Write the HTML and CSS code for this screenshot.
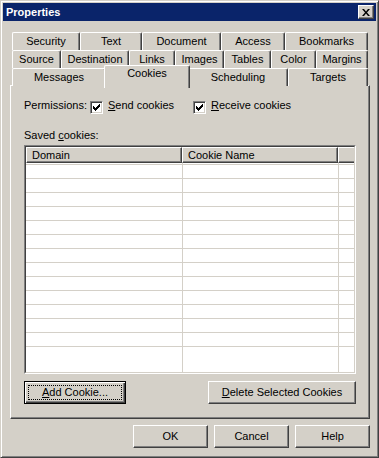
FILE: index.html
```html
<!DOCTYPE html>
<html>
<head>
  <title>Properties</title>
  <meta charset="UTF-8"/>
  <link rel="stylesheet" href="styles.css">
</head>

<body>
<div class="window">
  <header class="title-bar">
    <span class="title">Properties</span>
    <button class="close-btn" aria-label="Close">
      <svg width="8" height="7" viewBox="0 0 8 7">
        <path d="M0 0h2l2 2.4 2-2.4h2l-3 3.5 3 3.5h-2l-2-2.4-2 2.4h-2l3-3.5z" fill="#000"/>
      </svg>
    </button>
  </header>

  <div class="dialog-body">
    <!-- tab rows, back to front -->
    <div class="tabs">
      <div class="tab-row row-1">
        <div class="tab">Security</div>
        <div class="tab">Text</div>
        <div class="tab">Document</div>
        <div class="tab">Access</div>
        <div class="tab">Bookmarks</div>
      </div>
      <div class="tab-row row-2">
        <div class="tab">Source</div>
        <div class="tab">Destination</div>
        <div class="tab">Links</div>
        <div class="tab">Images</div>
        <div class="tab">Tables</div>
        <div class="tab">Color</div>
        <div class="tab">Margins</div>
      </div>
      <div class="tab-row row-3">
        <div class="tab">Messages</div>
        <div class="tab active">Cookies</div>
        <div class="tab">Scheduling</div>
        <div class="tab">Targets</div>
      </div>
    </div>

    <div class="panel">
      <div class="permissions">
        <span class="label">Permissions:</span>
        <label class="check">
          <span class="box"><svg width="7" height="7" viewBox="0 0 7 7"><path d="M6 0H7V3H6V4H5V5H4V6H3V7H2V6H1V5H0V2H1V3H2V4H3V3H4V2H5V1H6Z" fill="#000"/></svg></span>
          <span><u>S</u>end cookies</span>
        </label>
        <label class="check">
          <span class="box"><svg width="7" height="7" viewBox="0 0 7 7"><path d="M6 0H7V3H6V4H5V5H4V6H3V7H2V6H1V5H0V2H1V3H2V4H3V3H4V2H5V1H6Z" fill="#000"/></svg></span>
          <span><u>R</u>eceive cookies</span>
        </label>
      </div>

      <div class="saved-label">Saved <u>c</u>ookies:</div>

      <div class="list">
        <div class="list-inner">
          <div class="list-head">
            <div class="col-head">Domain</div>
            <div class="col-head">Cookie Name</div>
            <div class="col-head last"></div>
          </div>
          <div class="list-body">
            <div class="col"></div>
            <div class="col"></div>
            <div class="col"></div>
          </div>
        </div>
      </div>

      <div class="panel-buttons">
        <button class="btn default add-btn"><u>A</u>dd Cookie...</button>
        <button class="btn delete-btn"><u>D</u>elete Selected Cookies</button>
      </div>
    </div>

    <div class="dialog-buttons">
      <button class="btn">OK</button>
      <button class="btn">Cancel</button>
      <button class="btn">Help</button>
    </div>
  </div>
</div>
</body>
</html>
```

FILE: styles.css
```css
* {
  box-sizing: border-box;
}

body {
  margin: 0;
  padding: 0;
  background-color: #d4d0c8;
  color: #000;
  font-family: "Liberation Sans", Arial, sans-serif;
  font-size: 11px;
}

u {
  text-decoration: underline;
  text-underline-offset: 1px;
}

/* window frame */
.window {
  width: 379px;
  height: 458px;
  padding: 2px;
  background-color: #d4d0c8;
  border: 1px solid;
  border-color: #d4d0c8 #404040 #404040 #d4d0c8;
  box-shadow: inset 1px 1px #fff, inset -1px -1px #808080;
  display: flex;
  flex-direction: column;
}

.title-bar {
  height: 18px;
  background-color: #0a246a;
  display: flex;
  align-items: center;
  justify-content: space-between;
  padding-left: 3px;
  padding-right: 2px;
}

.title {
  color: #fff;
  font-weight: bold;
  line-height: 18px;
}

.close-btn {
  width: 16px;
  height: 14px;
  padding: 0;
  background-color: #d4d0c8;
  border: 1px solid;
  border-color: #fff #404040 #404040 #fff;
  box-shadow: inset -1px -1px #808080;
  display: flex;
  align-items: center;
  justify-content: center;
}

.close-btn svg {
  display: block;
  margin-left: -1px;
}

.dialog-body {
  padding: 11px 6px 7px 7px;
}

/* tabs */
.tabs {
  padding: 0 2px;
}

.tab-row {
  display: grid;
  height: 18px;
}

.row-1 {
  grid-template-columns: 68px 62px 79px 64px 83px;
}

.row-2 {
  grid-template-columns: 49px 68px 46px 49px 47px 45px 52px;
}

.row-3 {
  grid-template-columns: 94px 82px 100px 80px;
}

.tab {
  background-color: #d4d0c8;
  border-top: 1px solid #fff;
  border-left: 1px solid #fff;
  border-right: 1px solid #404040;
  border-radius: 2px 2px 0 0;
  box-shadow: inset -1px 0 #808080;
  padding-top: 2px;
  line-height: 13px;
  text-align: center;
  white-space: nowrap;
}

.tab.active {
  position: relative;
  z-index: 1;
  margin: -3px -2px -2px;
  padding-top: 1px;
}

/* page panel */
.panel {
  margin-top: -1px;
  border: 1px solid;
  border-color: #fff #404040 #404040 #fff;
  box-shadow: inset -1px -1px #808080;
  padding: 13px 13px 14px 13px;
}

.permissions {
  display: grid;
  grid-template-columns: 66px 103px auto;
  align-items: start;
  line-height: 13px;
}

.check {
  display: flex;
  align-items: flex-start;
  gap: 5px;
}

.box {
  width: 13px;
  height: 13px;
  margin-top: 2px;
  background-color: #fff;
  border: 1px solid;
  border-color: #808080 #fff #fff #808080;
  box-shadow: inset 1px 1px #404040, inset -1px -1px #d4d0c8;
  display: flex;
  align-items: center;
  justify-content: center;
}

.box svg {
  display: block;
}

.saved-label {
  margin-top: 15px;
  line-height: 13px;
}

/* list view */
.list {
  margin-top: 3px;
  height: 229px;
  border: 1px solid;
  border-color: #808080 #fff #fff #808080;
}

.list-inner {
  height: 100%;
  border: 1px solid;
  border-color: #404040 #d4d0c8 #d4d0c8 #404040;
  background-color: #fff;
  display: flex;
  flex-direction: column;
}

.list-head,
.list-body {
  display: grid;
  grid-template-columns: 156px 156px 1fr;
}

.col-head {
  height: 16px;
  background-color: #d4d0c8;
  border: 1px solid;
  border-color: #fff #404040 #404040 #fff;
  box-shadow: inset -1px -1px #808080;
  padding: 1px 0 0 5px;
  line-height: 13px;
  white-space: nowrap;
}

.col-head.last {
  border-right: none;
  box-shadow: inset 0 -1px #808080;
}

.list-body {
  flex: 1;
  background: repeating-linear-gradient(#fff 0 13px, #d4d0c8 13px 14px);
  background-position: 0 -12px;
}

.list-body .col + .col {
  border-left: 1px solid #d4d0c8;
}

/* buttons */
.btn {
  height: 23px;
  width: 75px;
  padding: 0;
  background-color: #d4d0c8;
  color: #000;
  font-family: inherit;
  font-size: 11px;
  line-height: 13px;
  border: 1px solid;
  border-color: #fff #404040 #404040 #fff;
  box-shadow: inset -1px -1px #808080;
  white-space: nowrap;
}

.btn.default {
  border-color: #000;
  box-shadow: inset 1px 1px #fff, inset -1px -1px #404040, inset -2px -2px #808080;
  outline: 1px dotted #000;
  outline-offset: -5px;
}

.panel-buttons {
  margin-top: 7px;
  display: flex;
  justify-content: space-between;
}

.add-btn {
  width: 102px;
}

.delete-btn {
  width: 148px;
}

.dialog-buttons {
  margin-top: 6px;
  display: flex;
  justify-content: flex-end;
  gap: 6px;
}
```
